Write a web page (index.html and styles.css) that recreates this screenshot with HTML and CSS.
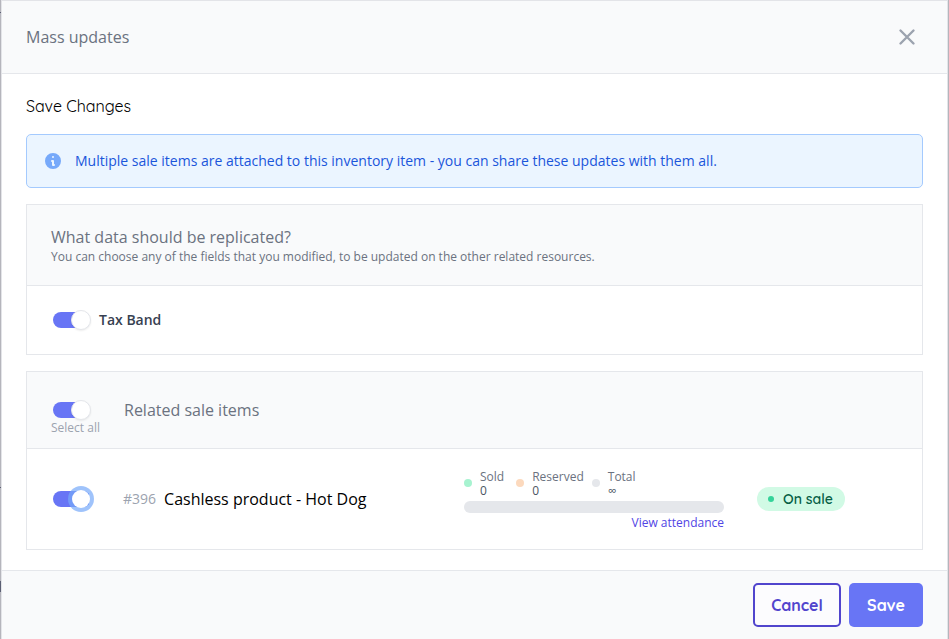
FILE: index.html
```html
<!DOCTYPE html>
<html lang="en">
<head>
<meta charset="utf-8">
<title>Mass updates</title>
<link rel="stylesheet" href="styles.css">
</head>
<body>
<div class="modal">
  <header class="modal-header">
    <h1 class="title">Mass updates</h1>
    <button class="close" aria-label="Close"><svg width="24" height="24" viewBox="0 0 24 24" fill="none" stroke="currentColor" stroke-width="2.4" stroke-linecap="round"><path d="M5.5 5.5l13 13M18.5 5.5l-13 13"/></svg></button>
  </header>
  <main class="content">
    <h2 class="subtitle">Save Changes</h2>
    <div class="alert">
      <svg width="20" height="20" viewBox="0 0 20 20" fill="currentColor"><path fill-rule="evenodd" d="M18 10a8 8 0 11-16 0 8 8 0 0116 0zm-7-4a1 1 0 11-2 0 1 1 0 012 0zM9 9a1 1 0 000 2v3a1 1 0 001 1h1a1 1 0 100-2v-3a1 1 0 00-1-1H9z" clip-rule="evenodd"/></svg>
      <span class="alert-text">Multiple sale items are attached to this inventory item - you can share these updates with them all.</span>
    </div>
    <section class="card fields">
      <div class="card-head">
        <h3 class="heading">What data should be replicated?</h3>
        <p class="hint">You can choose any of the fields that you modified, to be updated on the other related resources.</p>
      </div>
      <div class="field-row">
        <span class="toggle"><span class="knob"></span></span>
        <span class="field-name">Tax Band</span>
      </div>
    </section>
    <section class="card items">
      <div class="items-head">
        <div class="select-all"><span class="toggle"><span class="knob"></span></span><span class="select-label">Select all</span></div>
        <h3 class="heading">Related sale items</h3>
      </div>
      <div class="item-row">
        <span class="toggle"><span class="knob focused"></span></span>
        <div class="product"><span class="number">#396</span><span class="name">Cashless product - Hot Dog</span></div>
        <div class="attendance">
          <div class="stats">
            <div class="stat"><i class="dot sold"></i><div>Sold<b>0</b></div></div>
            <div class="stat"><i class="dot reserved"></i><div>Reserved<b>0</b></div></div>
            <div class="stat last"><i class="dot total"></i><div>Total<b>∞</b></div></div>
          </div>
          <div class="bar"></div>
          <a class="link">View attendance</a>
        </div>
        <span class="badge"><i class="badge-dot"></i><span class="badge-text">On sale</span></span>
      </div>
    </section>
  </main>
  <footer class="modal-footer">
    <button class="btn cancel">Cancel</button>
    <button class="btn save">Save</button>
  </footer>
</div>
</body>
</html>
```
FILE: styles.css
```css
* { box-sizing: border-box; }
body { margin: 0; height: 639px; overflow: hidden; background: linear-gradient(#5b5f73, #5b5f73) no-repeat 0 581px / 1px 11px, linear-gradient(#5b5f73, #5b5f73) no-repeat 0 12px / 1px 1px, linear-gradient(#5b5f73, #5b5f73) no-repeat 0 487px / 1px 1px, #b5b5bc; font-family: "Open Sans", sans-serif; color: #000; }
h1, h2, h3, p { margin: 0; font-weight: 400; }
button { font: inherit; margin: 0; }
svg { display: block; }
.modal { height: 639px; margin: 0 1px; border: solid #e3e4e8; border-width: 1px 1px 0; background: #fff; display: flex; flex-direction: column; }
.modal-header { height: 73px; flex: none; padding: 0 28px 0 24px; background: #f9fafb; border-bottom: 1px solid #e5e7eb; display: flex; align-items: center; justify-content: space-between; }
.title, .heading { font-size: 16px; line-height: 24px; color: #6b7280; }
.close { padding: 0; border: 0; background: none; color: #9ca3af; }
.content { flex: 1; padding: 20px 24px 0; }
.subtitle { font-family: Quicksand, Lato, sans-serif; font-size: 16px; font-weight: 400; line-height: 24px; }
.alert { height: 54px; margin-top: 16px; padding: 0 16px; border: 1px solid #a4cafe; border-radius: 5px; background: #ebf5ff; color: #76a9fa; display: flex; align-items: center; gap: 12px; }
.alert-text { font-size: 14px; line-height: 20px; color: #1a56db; }
.card { margin-top: 16px; border: 1px solid #e5e7eb; }
.fields { height: 151px; }
.card-head { height: 81px; padding: 20px 24px 0; background: #f9fafb; border-bottom: 1px solid #e5e7eb; }
.hint { font-size: 12px; line-height: 16px; color: #6b7280; }
.field-row { height: 68px; padding: 0 26px; display: flex; align-items: center; gap: 8px; }
.field-name { font-size: 14px; font-weight: 600; line-height: 20px; color: #374151; }
.toggle { flex: none; width: 38px; height: 16px; background: linear-gradient(#6875f5, #6875f5) no-repeat 0 0 / 36px 16px; border-radius: 8px; display: flex; align-items: center; justify-content: flex-end; }
.knob { width: 20px; height: 20px; flex: none; border: 1px solid #e5e7eb; border-radius: 50%; background: #fff; box-shadow: 0 1px 2px rgba(0,0,0,.08); }
.focused { width: 18px; height: 18px; margin-right: 1px; border: 0; box-shadow: 0 0 0 4px rgba(118,169,250,.7); }
.items { height: 179px; }
.items-head { height: 77px; padding: 0 24px; background: #f9fafb; border-bottom: 1px solid #e5e7eb; display: flex; align-items: center; }
.select-all { width: 73px; flex: none; padding-top: 17px; display: flex; flex-direction: column; }
.select-all .toggle { margin-left: 2px; }
.select-label { margin-top: 2px; font-size: 12px; line-height: 16px; color: #9ca3af; }
.item-row { height: 100px; padding: 0 26px; display: flex; align-items: center; }
.product { width: 341px; flex: none; margin-left: 32px; display: flex; align-items: center; gap: 8px; }
.number { font-size: 14px; line-height: 24px; color: #9ca3af; }
.name { font-size: 16px; line-height: 24px; }
.attendance { width: 260px; flex: none; padding-top: 2px; display: flex; flex-direction: column; }
.stats { display: flex; gap: 12px; }
.stat { display: flex; align-items: center; gap: 8px; font-size: 12px; line-height: 14px; color: #6b7280; }
.stat b { display: block; font-weight: 500; font-size: 12px; color: #4b5563; }
.last { margin-left: -4px; }
.dot { width: 8px; height: 8px; margin-top: -2px; border-radius: 50%; }
.sold { background: #a7f3d0; }
.reserved { background: #fcd9bd; }
.total { background: #e5e7eb; }
.bar { height: 12px; margin-top: 3px; border-radius: 6px; background: #e5e7eb; }
.link { align-self: flex-end; margin-top: 2px; font-size: 12px; line-height: 16px; color: #5145e5; }
.badge { width: 88px; height: 24px; margin-left: 33px; padding-left: 11px; border-radius: 12px; background: #d1fae5; display: flex; align-items: center; gap: 9px; }
.badge-dot { width: 6px; height: 6px; border-radius: 50%; background: #34d399; }
.badge-text { font: 600 14px/20px Quicksand, Lato, sans-serif; color: #065f46; }
.modal-footer { height: 69px; flex: none; padding: 12px 24px 0; background: #f9fafb; border-top: 1px solid #e5e7eb; display: flex; justify-content: flex-end; gap: 8px; }
.btn { height: 44px; padding: 0; border-radius: 5px; font: 700 16px/24px Quicksand, Lato, sans-serif; }
.cancel { width: 88px; border: 2px solid #5145cd; background: #fcfcfe; color: #5145cd; }
.save { width: 74px; border: 0; background: #6875f5; color: #fff; }
```
